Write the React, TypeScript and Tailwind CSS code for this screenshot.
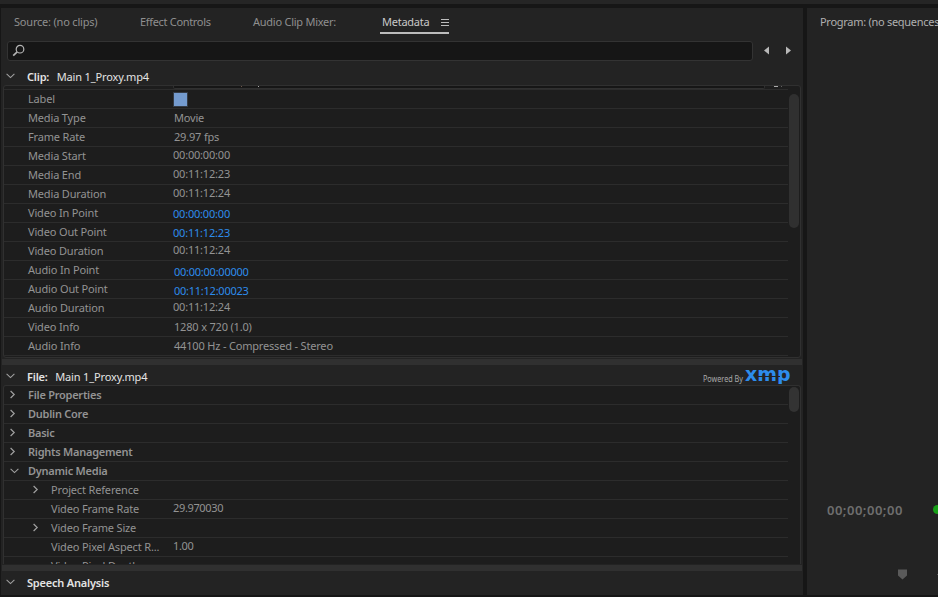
import clsx from "clsx";

interface Row {
  label: string;
  value?: string;
  kind?: "text" | "timecode" | "editable" | "samples" | "color";
}

interface Property {
  label: string;
  value?: string;
  level: 0 | 1;
  state?: "open" | "closed";
}

const clipRows: Row[] = [
  { label: "Label", kind: "color" },
  { label: "Media Type", value: "Movie", kind: "text" },
  { label: "Frame Rate", value: "29.97 fps", kind: "text" },
  { label: "Media Start", value: "00:00:00:00", kind: "timecode" },
  { label: "Media End", value: "00:11:12:23", kind: "timecode" },
  { label: "Media Duration", value: "00:11:12:24", kind: "timecode" },
  { label: "Video In Point", value: "00:00:00:00", kind: "editable" },
  { label: "Video Out Point", value: "00:11:12:23", kind: "editable" },
  { label: "Video Duration", value: "00:11:12:24", kind: "timecode" },
  { label: "Audio In Point", value: "00:00:00:00000", kind: "samples" },
  { label: "Audio Out Point", value: "00:11:12:00023", kind: "samples" },
  { label: "Audio Duration", value: "00:11:12:24", kind: "timecode" },
  { label: "Video Info", value: "1280 x 720 (1.0)", kind: "text" },
  { label: "Audio Info", value: "44100 Hz - Compressed - Stereo", kind: "text" },
];

const fileRows: Property[] = [
  { label: "File Properties", level: 0, state: "closed" },
  { label: "Dublin Core", level: 0, state: "closed" },
  { label: "Basic", level: 0, state: "closed" },
  { label: "Rights Management", level: 0, state: "closed" },
  { label: "Dynamic Media", level: 0, state: "open" },
  { label: "Project Reference", level: 1, state: "closed" },
  { label: "Video Frame Rate", value: "29.970030", level: 1 },
  { label: "Video Frame Size", level: 1, state: "closed" },
  { label: "Video Pixel Aspect R...", value: "1.00", level: 1 },
  { label: "Video Pixel Depth", level: 1 },
];

function Chevron({ open }: { open?: boolean }) {
  return open ? (
    <svg className="block" width="9" height="6" viewBox="0 0 9 6" fill="none" stroke="#a0a0a0" strokeWidth="1.1">
      <path d="M0.6 0.8 4.5 4.6 8.4 0.8" />
    </svg>
  ) : (
    <svg className="block" width="6" height="9" viewBox="0 0 6 9" fill="none" stroke="#a0a0a0" strokeWidth="1.2">
      <path d="M0.6 1 4.2 4.5 0.6 8" />
    </svg>
  );
}

function SectionHeader({ title, name }: { title: string; name?: string }) {
  return (
    <div className="flex items-center text-[11px] text-[#e4e4e4]">
      <div className="w-[21px] pb-[3px]">
        <Chevron open />
      </div>
      <span className="font-semibold tracking-[-0.2px]">{title}</span>
      {name && <span className="ml-[7.5px] tracking-[-0.14px]">{name}</span>}
    </div>
  );
}

function ClipRow({ label, value, kind }: Row) {
  return (
    <div className="flex h-[19px] shrink-0 items-center border-b border-[#2c2c2c] pl-6">
      <span className="w-[145px] shrink-0 tracking-[-0.16px]">{label}</span>
      {kind === "color" ? (
        <span className="size-[15px] border border-[#343b45] bg-[#749bcf]" />
      ) : (
        <span
          className={clsx(
            kind === "text" && "ml-px tracking-[-0.18px]",
            kind === "timecode" && "pb-[2px] tracking-[-0.2px]",
            kind === "editable" && "pt-[2px] tracking-[-0.2px] text-[#2d8ceb]",
            kind === "samples" && "ml-px pt-[4px] tracking-[-0.25px] text-[#2d8ceb]"
          )}
        >
          {value}
        </span>
      )}
    </div>
  );
}

function PropertyRow({ label, value, level, state }: Property) {
  return (
    <div
      className={clsx(
        "flex h-[19px] shrink-0 items-center border-b border-[#2c2c2c]",
        level === 0 ? "pl-[6px] font-semibold tracking-[-0.25px]" : "pl-[29px] tracking-[-0.16px]"
      )}
    >
      <div className="w-[18px] shrink-0 pb-px">{state && <Chevron open={state === "open"} />}</div>
      <span className={clsx("shrink-0", level === 1 && "w-[122px]")}>{label}</span>
      {value && <span className="pb-[2px] tracking-[-0.35px]">{value}</span>}
    </div>
  );
}

function PoweredByXmp() {
  return (
    <svg className="block" width="92" height="20" viewBox="0 0 92 20">
      <text x="3" y="15" textLength="40" lengthAdjust="spacingAndGlyphs" className="fill-[#a8a8a8] text-[9px]">
        Powered By
      </text>
      <text
        x="45"
        y="14"
        textLength="45.5"
        lengthAdjust="spacingAndGlyphs"
        className="fill-[#2d8ceb] font-['DejaVu_Sans'] text-[20px] font-bold"
      >
        xmp
      </text>
      {/* seam through the m and p stems */}
      <path d="M57.5 9.5H80" stroke="#232323" strokeWidth="1" />
      {/* trims the descender */}
      <path d="M76 17h14v3H76z" fill="#232323" />
    </svg>
  );
}

function MetadataPanel() {
  return (
    <section className="flex h-[587px] w-[802px] shrink-0 flex-col bg-[#232323]">
      <nav className="flex h-[33px] pl-[13px] pt-[6px] text-[11px] leading-[16px] text-[#8f8f8f]">
        <span className="w-[126px] tracking-[-0.2px]">Source: (no clips)</span>
        <span className="w-[113px] tracking-[-0.32px]">Effect Controls</span>
        <span className="w-[127px] tracking-[-0.25px]">Audio Clip Mixer:</span>
        <div className="flex h-5 w-[69px] items-start justify-between border-b-2 border-[#bcbcbc] pl-[2px] text-[#c8c8c8]">
          <span className="tracking-[-0.25px]">Metadata</span>
          <div className="mt-[5px] flex h-[7px] w-2 flex-col justify-between">
            <i className="h-px bg-[#bcbcbc]" />
            <i className="h-px bg-[#bcbcbc]" />
            <i className="h-px bg-[#bcbcbc]" />
          </div>
        </div>
      </nav>

      <div className="flex h-5 items-center pl-[6px]">
        <div className="flex h-5 w-[746px] items-center rounded-[3px] border border-[#333333] bg-[#161616] pl-[4px]">
          <svg className="mb-px" width="13" height="13" viewBox="0 0 13 13" fill="none" stroke="#b4b4b4">
            <circle cx="8" cy="5.2" r="3.8" strokeWidth="1.2" />
            <path d="M5.2 7.9 1.2 11.6" strokeWidth="1.7" />
          </svg>
        </div>
        <svg className="mb-px ml-[11px]" width="28" height="9" viewBox="0 0 28 9" fill="#b8b8b8">
          <path d="M0 4.5 5 0.5v8z" />
          <path d="M22 0.5 27 4.5 22 8.5z" />
        </svg>
      </div>

      <div className="flex h-6 items-center pl-[5px] pt-[8px]">
        <SectionHeader title="Clip:" name="Main 1_Proxy.mp4" />
      </div>

      <div className="ml-[2px] flex h-[273px] w-[798px] shrink-0 overflow-hidden rounded-t-[3px] rounded-b-[3px] border border-[#303030] bg-[#1d1d1d] text-[11px] text-[#939393]">
        <div className="flex w-[784px] flex-col">
          <div className="flex h-1 shrink-0 items-start border-b border-[#2c2c2c]">
            <div className="ml-[169px] h-[3px] w-[592px] rounded-b-[2px] border-x border-b border-[#303030] bg-[#161616]">
              <div className="ml-[67px] flex w-[18px] justify-between">
                <i className="h-px w-px bg-[#6b5548]" />
                <i className="h-px w-px bg-[#a8a8a8]" />
              </div>
            </div>
            <i className="ml-[9px] h-px w-[4px] bg-[#aaaaaa]" />
            <i className="ml-[3px] h-px w-px bg-[#606060]" />
          </div>
          {clipRows.map((row) => (
            <ClipRow key={row.label} {...row} />
          ))}
        </div>
        <div className="ml-px mt-2 h-[134px] w-[10px] rounded-full bg-[#303030]" />
      </div>

      <div className="ml-px mt-px h-[6px] w-[800px] shrink-0 bg-[#303030]" />

      <div className="flex h-5 items-center justify-between pl-[5px] pr-[11px] pt-[4px]">
        <SectionHeader title="File:" name="Main 1_Proxy.mp4" />
        <PoweredByXmp />
      </div>

      <div className="ml-[2px] flex h-[179px] w-[798px] shrink-0 overflow-hidden rounded-t-[3px] border border-b-0 border-[#303030] bg-[#1d1d1d] text-[11px] text-[#939393]">
        <div className="flex w-[784px] flex-col">
          {fileRows.map((row) => (
            <PropertyRow key={row.label} {...row} />
          ))}
        </div>
        <div className="ml-px mt-px h-[25px] w-[10px] rounded-full bg-[#333333]" />
      </div>

      <div className="ml-px mt-px h-[6px] w-[800px] shrink-0 bg-[#303030]" />

      <div className="flex h-6 items-center pl-[5px]">
        <SectionHeader title="Speech Analysis" />
      </div>
    </section>
  );
}

function ProgramPanel() {
  return (
    <section className="flex h-[587px] w-[131px] shrink-0 flex-col overflow-hidden bg-[#232323]">
      <h2 className="whitespace-nowrap pl-[13px] pt-[6px] text-[11px] leading-[16px] tracking-[-0.28px] text-[#b0b0b0]">
        Program: (no sequences)
      </h2>
      <div className="mt-[470px] flex h-[20px] items-center pl-5">
        <span className="w-[106px] shrink-0 pt-[2px] text-[13px] font-semibold tracking-[0.5px] text-[#6e6e6e]">
          00;00;00;00
        </span>
        <span className="mb-px size-[9px] shrink-0 rounded-full bg-[#18a018]" />
      </div>
      <div className="mt-[49px] flex items-center pl-[91px]">
        <svg width="9" height="11" viewBox="0 0 9 11" fill="#5a5a5a">
          <path d="M0 0.5h9v6L4.5 10.5 0 6.5z" />
        </svg>
        <i className="ml-[30px] h-px w-px bg-[#555555]" />
      </div>
    </section>
  );
}

export default function App() {
  return (
    <main className="flex h-[597px] w-[938px] flex-col overflow-hidden bg-[#161616] font-['Noto_Sans',sans-serif]">
      <div className="mb-1 h-1 shrink-0 bg-[#252525]" />
      <div className="flex gap-1 pl-px">
        <MetadataPanel />
        <ProgramPanel />
      </div>
    </main>
  );
}
